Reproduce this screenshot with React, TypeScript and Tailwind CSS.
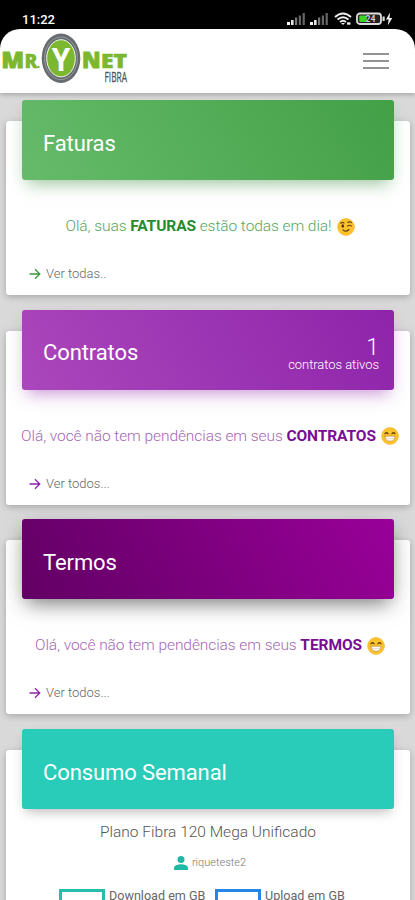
import type { ReactNode } from 'react'

function Signal() {
  return (
    <svg width="19" height="14" viewBox="0 0 19 14">
      <rect x="0" y="10" width="3" height="3" fill="#f5f5f5" />
      <rect x="4" y="8" width="2.6" height="5" fill="#e5e5e5" />
      <rect x="8" y="5.5" width="2.2" height="7.5" fill="#777" />
      <rect x="11.8" y="3.5" width="2.2" height="9.5" fill="#666" />
      <rect x="15.6" y="1" width="2.2" height="12" fill="#666" />
    </svg>
  )
}

function StatusBar() {
  return (
    <div className="flex h-[29px] items-start justify-between bg-black pt-3 pr-[20px] pl-[22px] text-white">
      <span className="text-[13px] leading-[15px] font-medium">11:22</span>
      <div className="flex h-[14px] items-center">
        <Signal />
        <span className="w-1" />
        <Signal />
        <svg className="ml-[5px]" width="18" height="14" viewBox="0 0 18 14" fill="none" stroke="#eee" strokeWidth="2">
          <path d="M1 5Q9-2 17 5M3.5 7.5Q9 3 14.5 7.5M6 10Q9 7.5 12 10" />
          <path d="M7 11h4l-2 2z" fill="#eee" stroke="none" />
          <path d="M13 11.5h3.5" strokeWidth="2.4" />
        </svg>
        <svg className="ml-[4px]" width="39" height="14" viewBox="0 0 39 14">
          <rect x="1" y="1.5" width="24" height="10.5" rx="2.8" fill="#222" stroke="#ddd" strokeWidth="1.8" />
          <rect x="3.3" y="3.4" width="7.5" height="6.7" rx="1" fill="#3ed321" />
          <text x="9.5" y="9.8" fontSize="8.5" fontWeight="700" fill="#ccc">24</text>
          <path d="M26.5 4.5h2.2v4.5h-2.2z" fill="#ddd" />
          <path d="M34 0.5L30 7.5h2.6L31.8 13.5 36.3 6h-2.8z" fill="#eee" />
        </svg>
      </div>
    </div>
  )
}

function Logo() {
  return (
    <svg width="130" height="64" viewBox="0 0 130 64" fontFamily="'Open Sans', 'Liberation Sans', sans-serif">
      <g fill="#7cb82f" stroke="#7cb82f" strokeWidth="1" fontWeight="800">
        <text x="1.5" y="39.2" fontSize="22.5" textLength="22.5" lengthAdjust="spacingAndGlyphs">M</text>
        <text x="24.5" y="39.2" fontSize="18.5" strokeWidth="0.4" textLength="13" lengthAdjust="spacingAndGlyphs">R</text>
        <text x="37" y="39" fontSize="12" strokeWidth="0" textLength="3" lengthAdjust="spacingAndGlyphs">.</text>
        <text x="82" y="39.2" fontSize="22.5" textLength="18.5" lengthAdjust="spacingAndGlyphs">N</text>
        <text x="101" y="39.2" fontSize="18.5" strokeWidth="0.6" textLength="26" lengthAdjust="spacingAndGlyphs">ET</text>
      </g>
      <ellipse cx="61" cy="29.3" rx="19.3" ry="24.7" fill="#676c70" />
      <ellipse cx="61" cy="29.3" rx="16.4" ry="21.3" fill="none" stroke="#a0a3a5" strokeWidth="0.8" />
      <ellipse cx="61" cy="29.3" rx="14.3" ry="18.6" fill="#7cb82f" stroke="#f2f6ed" strokeWidth="1" />
      <text x="51.8" y="41.6" fontSize="32" fontWeight="700" fill="#fff" textLength="18.5" lengthAdjust="spacingAndGlyphs">Y</text>
      <text x="104.5" y="53.3" fontSize="15" fontWeight="400" fill="#4e5357" stroke="#4e5357" strokeWidth="0.3" textLength="22.5" lengthAdjust="spacingAndGlyphs">FIBRA</text>
    </svg>
  )
}

function Wink() {
  return (
    <svg className="ml-[5px] shrink-0" width="18" height="18" viewBox="0 0 18 18" fill="none" strokeLinecap="round">
      <circle cx="9" cy="9" r="8.4" fill="#fcc32c" stroke="#f5ac24" strokeWidth="0.6" />
      <path d="M3.8 5.3Q5.5 3.8 7 5M10.8 4.4Q13 3 14.3 4.7M10.5 8Q12.5 6.5 14.3 8M6 12Q9.2 14.5 12 11.5" stroke="#6b451a" strokeWidth="1.2" />
      <ellipse cx="5.8" cy="8" rx="1.3" ry="1.7" fill="#50351d" />
    </svg>
  )
}

function Grin() {
  return (
    <svg className="ml-[5px] shrink-0" width="18" height="18" viewBox="0 0 18 18" fill="none" strokeLinecap="round">
      <circle cx="9" cy="9" r="8.4" fill="#fcc32c" stroke="#f5ac24" strokeWidth="0.6" />
      <path d="M4 6.7Q5.5 4.8 7 6.7M11 6.7Q12.5 4.8 14 6.7" stroke="#6b451a" strokeWidth="1.3" />
      <path d="M4 9.2h10q.2 5-5 5t-5-5z" fill="#fff" stroke="#b3802b" strokeWidth="0.6" />
      <path d="M4.7 11.7h8.6" stroke="#ccbea4" strokeWidth="0.6" />
    </svg>
  )
}

type CardProps = {
  title: string
  banner: string
  aside?: ReactNode
  children: ReactNode
}

function Card({ title, banner, aside, children }: CardProps) {
  return (
    <section className="h-[174px] rounded-[3px] bg-white px-4 shadow-[0_2px_7px_rgba(0,0,0,0.23)]">
      <div className={`relative -top-[21px] -mb-[21px] flex h-20 items-center justify-between rounded-[3px] pr-[15px] pl-[21px] text-white ${banner}`}>
        <h2 className="pt-[7px] text-[22px] leading-7 font-normal tracking-[-0.1px]">{title}</h2>
        {aside}
      </div>
      {children}
    </section>
  )
}

type NoticeProps = {
  before: string
  strong: string
  after?: string
  color: string
  strongColor: string
  emoji: ReactNode
  link: string
  arrow: string
}

function Notice({ before, strong, after, color, strongColor, emoji, link, arrow }: NoticeProps) {
  return (
    <>
      <div className="-mx-4 flex h-[86px] items-center justify-center pt-[7px] pl-1 whitespace-nowrap">
        <p className={`flex shrink-0 items-center text-[15.5px] font-light tracking-[-0.07px] ${color}`}>
          <span className="whitespace-pre">{before}<b className={`font-bold ${strongColor}`}>{strong}</b>{after}</span>
          {emoji}
        </p>
      </div>
      <div className="flex items-center pl-[7px] text-[13px] leading-4 font-light text-[#666]">
        <svg className={arrow} width="12" height="12" viewBox="0 0 12 12" fill="none" stroke="currentColor" strokeWidth="1.3">
          <path d="M0.5 6h10M6 1.2L10.8 6 6 10.8" />
        </svg>
        <span className="ml-[5px]">{link}</span>
      </div>
    </>
  )
}

export default function App() {
  return (
    <div className="h-[900px] overflow-hidden bg-[#d9d9d9] font-['Roboto','Liberation_Sans',sans-serif]">
      <StatusBar />
      <div className="relative bg-[linear-gradient(#000_50%,#d9d9d9_50%)]">
        <header className="flex h-16 items-center justify-between rounded-t-[20px] bg-white pr-[26px] shadow-[0_2px_4px_rgba(0,0,0,0.22)]">
          <Logo />
          <button type="button" aria-label="Menu" className="flex w-[26px] flex-col gap-[5px]">
            <span className="h-[2px] bg-[#929292]" />
            <span className="h-[2px] bg-[#929292]" />
            <span className="h-[2px] bg-[#929292]" />
          </button>
        </header>
      </div>

      <main className="flex flex-col gap-[35.7px] pt-7 pr-[5px] pl-[6px]">
        <Card title="Faturas" banner="bg-[linear-gradient(60deg,#66bb6a,#43a047)] shadow-[0_8px_16px_-5px_rgba(60,140,65,0.55)]">
          <Notice
            before="Olá, suas "
            strong="FATURAS"
            after=" estão todas em dia!"
            color="text-[#5aa55e]"
            strongColor="text-[#258b2c]"
            emoji={<Wink />}
            link="Ver todas.."
            arrow="text-[#38983d]"
          />
        </Card>

        <Card
          title="Contratos"
          banner="bg-[linear-gradient(60deg,#ab47bc,#8e24aa)] shadow-[0_8px_16px_-5px_rgba(142,36,170,0.5)]"
          aside={
            <div className="pt-[9px] text-right font-light">
              <div className="text-[23px] leading-[21px]">1</div>
              <div className="text-[13px] leading-[14px] tracking-[-0.05px]">contratos ativos</div>
            </div>
          }
        >
          <Notice
            before="Olá, você não tem pendências em seus "
            strong="CONTRATOS"
            color="text-[#a467b3]"
            strongColor="text-[#790d92]"
            emoji={<Grin />}
            link="Ver todos..."
            arrow="text-[#8e24aa]"
          />
        </Card>

        <Card title="Termos" banner="bg-[linear-gradient(60deg,#620064,#990099)] shadow-[0_8px_20px_-4px_rgba(0,0,0,0.55)]">
          <Notice
            before="Olá, você não tem pendências em seus "
            strong="TERMOS"
            color="text-[#a467b3]"
            strongColor="text-[#790d92]"
            emoji={<Grin />}
            link="Ver todos..."
            arrow="text-[#8e24aa]"
          />
        </Card>

        <Card title="Consumo Semanal" banner="bg-[#29cbb9] shadow-[0_6px_12px_-4px_rgba(0,0,0,0.3)]">
          <p className="pt-[13px] text-center text-[15.5px] leading-5 font-light text-[#555]">Plano Fibra 120 Mega Unificado</p>
          <div className="mt-[13px] flex items-center justify-center gap-1 pl-1 text-[11px] leading-4 font-light text-[#777]">
            <svg width="14" height="14" viewBox="0 0 14 14" fill="#20b9a6">
              <circle cx="7" cy="3.5" r="3.5" />
              <path d="M0 14v-2.2C0 9.2 4.5 8.2 7 8.2s7 1 7 3.6V14z" />
            </svg>
            riqueteste2
          </div>
          <div className="mt-[18px] flex items-start pl-[37px] text-[12.6px] leading-[14px] text-[#666]">
            <span className="h-6 w-[46px] shrink-0 border-[3px] border-[#26bda9]" />
            <span className="ml-1 w-[97px] whitespace-nowrap">Download em GB</span>
            <span className="ml-[9px] h-6 w-[46px] shrink-0 border-[3px] border-[#2487e8]" />
            <span className="ml-1 whitespace-nowrap">Upload em GB</span>
          </div>
        </Card>
      </main>
    </div>
  )
}
